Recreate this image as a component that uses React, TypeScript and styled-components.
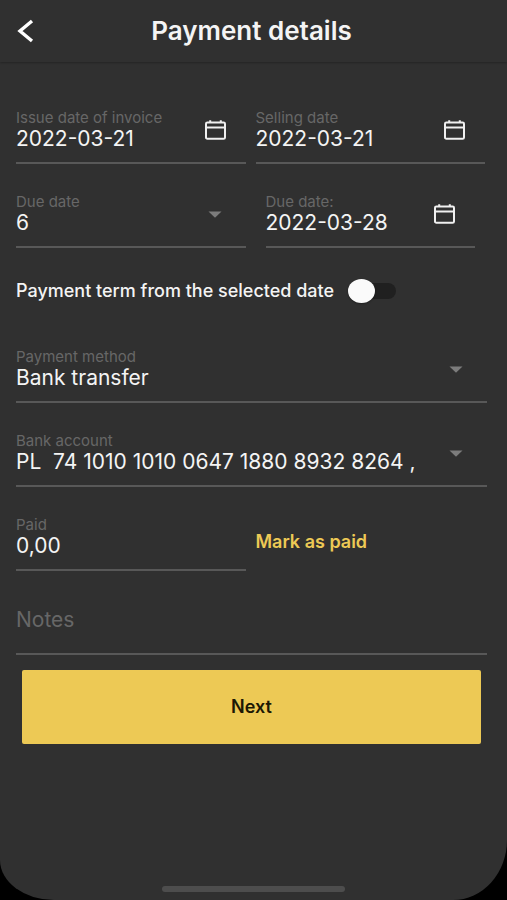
import React, { useState } from "react";
import styled, { createGlobalStyle } from "styled-components";

const color = {
  surface: "#303030",
  text: "#f4f4f4",
  muted: "#676767",
  line: "#585858",
  accent: "#edc955",
};

const GlobalStyle = createGlobalStyle`
  *, *::before, *::after { box-sizing: border-box; }
  body { margin: 0; background: #000; }
  button, input, select { font: inherit; color: inherit; }
`;

const Screen = styled.div`
  display: flex;
  flex-direction: column;
  min-height: 100vh;
  background: ${color.surface};
  color: ${color.text};
  font-family: Inter, "Liberation Sans", sans-serif;
  border-radius: 0 0 54px 54px / 0 0 60px 40px;
`;

const Header = styled.header`
  display: grid;
  grid-template-columns: 48px 1fr 52px;
  align-items: center;
  height: 62px;
  box-shadow: 0 1px 2px rgba(0, 0, 0, 0.25);
`;

const Title = styled.h1`
  margin: 0;
  text-align: center;
  font-size: 26px;
  line-height: 32px;
  font-weight: 600;
`;

const IconButton = styled.button`
  display: flex;
  padding: 0;
  border: 0;
  background: none;
  cursor: pointer;
`;

const BackButton = styled(IconButton)`
  padding-left: 16px;
`;

const Form = styled.form`
  display: flex;
  flex-direction: column;
  padding: 18px 20px 0 16px;
`;

const Row = styled.div`
  display: grid;
  grid-template-columns: 1fr 1fr;
  column-gap: 10px;
  padding-right: 2px;
`;

const FieldBox = styled.div<{ $inset?: boolean }>`
  display: grid;
  grid-template-columns: minmax(0, 1fr) auto;
  grid-template-rows: 18px 24px;
  height: 84px;
  margin: 0 ${(p) => (p.$inset ? "10px" : "0")};
  padding: 29px 0 11px;
  border-bottom: 2px solid ${color.line};
`;

const Label = styled.label`
  grid-area: 1 / 1;
  color: ${color.muted};
  font-size: 15px;
  line-height: 18px;
  white-space: nowrap;
`;

const TextInput = styled.input`
  grid-area: 2 / 1;
  width: 100%;
  height: 24px;
  padding: 0;
  border: 0;
  outline: 0;
  background: none;
  font-size: 21px;
  line-height: 24px;

  &::placeholder {
    color: ${color.muted};
    opacity: 1;
  }
`;

const Select = styled.select`
  grid-area: 2 / 1 / 3 / 3;
  width: 100%;
  height: 24px;
  padding: 0 60px 0 0;
  border: 0;
  outline: 0;
  appearance: none;
  background: none;
  font-size: 21px;
  line-height: 24px;

  option { background: ${color.surface}; }
`;

const Adornment = styled.div<{ $passive?: boolean }>`
  grid-area: 1 / 2 / 3 / 3;
  display: flex;
  align-items: center;
  padding-right: ${(p) => (p.$passive ? "24px" : "20px")};
  pointer-events: ${(p) => (p.$passive ? "none" : "auto")};
`;

const SwitchRow = styled.div`
  display: flex;
  align-items: center;
  gap: 14px;
  height: 71px;
  padding-top: 14px;
  font-size: 18px;
  line-height: 24px;
  font-weight: 500;
`;

const Switch = styled.input`
  display: grid;
  flex: none;
  align-items: center;
  width: 48px;
  height: 24px;
  margin: 0;
  appearance: none;
  cursor: pointer;

  &::before, &::after {
    content: "";
    grid-area: 1 / 1;
  }
  &::before {
    height: 16px;
    margin-left: 6px;
    border-radius: 8px;
    background: #202020;
  }
  &::after {
    width: 27px;
    height: 24px;
    border-radius: 50%;
    background: #fafafa;
    box-shadow: 0 1px 2px rgba(0, 0, 0, 0.3);
  }
  &:checked::after { justify-self: end; background: ${color.accent}; }
`;

const LinkButton = styled.button`
  justify-self: start;
  align-self: end;
  margin-bottom: 17px;
  padding: 0;
  border: 0;
  background: none;
  color: ${color.accent};
  font-size: 18px;
  line-height: 24px;
  font-weight: 600;
  cursor: pointer;
`;

const NotesBox = styled.div`
  display: flex;
  align-items: flex-end;
  height: 84px;
  padding-bottom: 21px;
  border-bottom: 2px solid ${color.line};
`;

const NextButton = styled.button`
  height: 74px;
  margin: 15px 6px 0;
  border: 0;
  border-radius: 2px;
  background: ${color.accent};
  color: #1c1804;
  font-size: 18px;
  line-height: 24px;
  font-weight: 600;
  cursor: pointer;
`;

const HomeBar = styled.div`
  width: 36%;
  height: 6px;
  margin: auto auto 8px;
  border-radius: 3px;
  background: #4d4d4d;
`;

const BackIcon = () => (
  <svg width="20" height="24" viewBox="0 0 20 24" fill="none" stroke="#fff" strokeWidth="3.4" aria-hidden="true">
    <path d="M16 2 4 12 16 22" />
  </svg>
);

const CalendarIcon = () => (
  <svg width="21" height="20" viewBox="0 0 21 20" fill="none" stroke="#f0f0f0" strokeWidth="2" aria-hidden="true">
    <rect x="1" y="2.4" width="19" height="16.4" rx="1.4" />
    <path d="M1 7.4h19M5.2 0.3v2.4M15.8 0.3v2.4" />
  </svg>
);

const ArrowIcon = () => (
  <svg width="14" height="7" viewBox="0 0 14 7" aria-hidden="true">
    <path d="M0.5 0.5h13L7 6.8z" fill="#7c7c7c" />
  </svg>
);

type DateFieldProps = { id: string; label: string; value: string; inset?: boolean };

const DateField = ({ id, label, value, inset }: DateFieldProps) => (
  <FieldBox $inset={inset}>
    <Label htmlFor={id}>{label}</Label>
    <TextInput id={id} defaultValue={value} />
    <Adornment>
      <IconButton type="button" aria-label={`Choose ${label}`}>
        <CalendarIcon />
      </IconButton>
    </Adornment>
  </FieldBox>
);

type SelectFieldProps = { id: string; label: string; options: string[] };

const SelectField = ({ id, label, options }: SelectFieldProps) => (
  <FieldBox>
    <Label htmlFor={id}>{label}</Label>
    <Select id={id}>
      {options.map((o) => (
        <option key={o}>{o}</option>
      ))}
    </Select>
    <Adornment $passive>
      <ArrowIcon />
    </Adornment>
  </FieldBox>
);

export default function App() {
  const [fromSelected, setFromSelected] = useState(false);

  return (
    <>
      <GlobalStyle />
      <Screen>
        <Header>
          <BackButton type="button" aria-label="Back">
            <BackIcon />
          </BackButton>
          <Title>Payment details</Title>
        </Header>
        <Form onSubmit={(e) => e.preventDefault()}>
          <Row>
            <DateField id="issue" label="Issue date of invoice" value="2022-03-21" />
            <DateField id="selling" label="Selling date" value="2022-03-21" />
          </Row>
          <Row>
            <SelectField id="days" label="Due date" options={["6"]} />
            <DateField id="due" label="Due date:" value="2022-03-28" inset />
          </Row>
          <SwitchRow>
            <label htmlFor="term">Payment term from the selected date</label>
            <Switch
              id="term"
              type="checkbox"
              role="switch"
              checked={fromSelected}
              onChange={(e) => setFromSelected(e.target.checked)}
            />
          </SwitchRow>
          <SelectField id="method" label="Payment method" options={["Bank transfer"]} />
          <SelectField
            id="account"
            label="Bank account"
            options={["PL\u00a0 74 1010 1010 0647 1880 8932 8264 ,"]}
          />
          <Row>
            <FieldBox>
              <Label htmlFor="paid">Paid</Label>
              <TextInput id="paid" inputMode="decimal" defaultValue="0,00" />
            </FieldBox>
            <LinkButton type="button">Mark as paid</LinkButton>
          </Row>
          <NotesBox>
            <TextInput aria-label="Notes" placeholder="Notes" />
          </NotesBox>
          <NextButton type="submit">Next</NextButton>
        </Form>
        <HomeBar />
      </Screen>
    </>
  );
}
